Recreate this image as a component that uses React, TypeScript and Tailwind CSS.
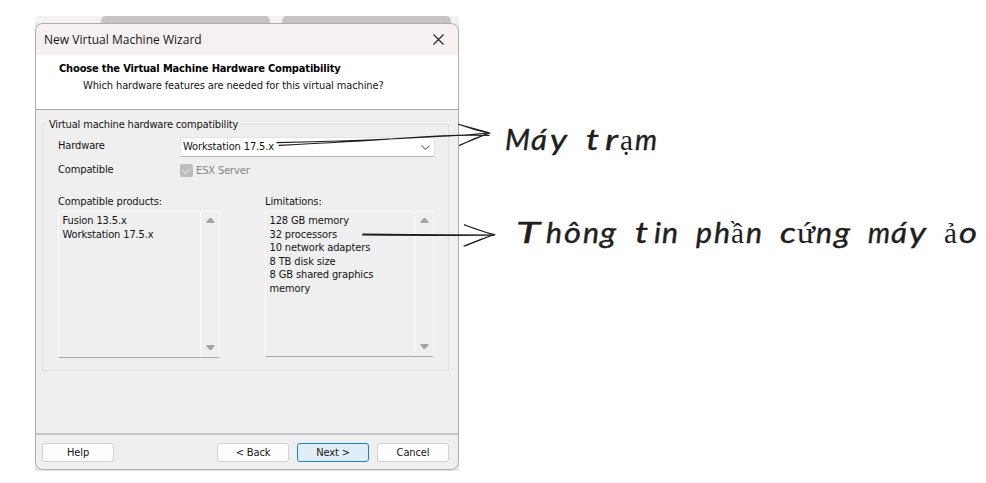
import type { ReactNode } from "react";

function WizardButton({ children, primary = false }: { children: ReactNode; primary?: boolean }) {
  return (
    <button
      className={`flex h-[19px] w-[72px] items-center justify-center rounded-[3px] border ${
        primary ? "border-[#1683d8] bg-[#e0eef9]" : "border-[#d2d2d2] bg-[#fdfdfd]"
      }`}
    >
      {children}
    </button>
  );
}

function ListBox({ items, className }: { items: string[]; className: string }) {
  return (
    <div className={`flex border border-t-[#f6f6f6] border-r-[#f5f5f5] border-b-[#aaaaaa] border-l-white ${className}`}>
      <ul className="flex-1 pt-[2px] pl-[3.5px] leading-[13.6px] whitespace-nowrap">
        {items.map((item) => (
          <li key={item}>{item}</li>
        ))}
      </ul>
      <div className="flex w-[19px] flex-col items-center justify-between border-l border-white pt-[5px] pb-[6px] text-[#a3a3a3]">
        <svg width="9" height="7" viewBox="0 0 9 7" fill="currentColor">
          <path d="M3.6 1h1.8L8.5 5v1h-8V5z" />
        </svg>
        <svg width="9" height="7" viewBox="0 0 9 7" fill="currentColor">
          <path d="M3.6 6h1.8L8.5 2V1h-8v1z" />
        </svg>
      </div>
    </div>
  );
}

function Wizard() {
  return (
    <section className="flex h-[447px] w-[424px] flex-col overflow-hidden rounded-[8px] border border-[#adadad] bg-[#efefef] font-['DejaVu_Sans_Condensed','DejaVu_Sans',sans-serif] text-[11px] leading-[14px] tracking-[-0.12px] text-[#141414]">
      <header className="flex h-[31px] shrink-0 items-center justify-between bg-[#f6f0f0] pr-[14px] pl-[8px] font-['Open_Sans',sans-serif] text-[12px]">
        <span className="whitespace-nowrap tracking-[0.02px]">New Virtual Machine Wizard</span>
        <svg width="11" height="11" viewBox="0 0 11 11" fill="none" stroke="#222" strokeWidth="1.1">
          <path d="M.5.5l10 10M10.5.5l-10 10" />
        </svg>
      </header>
      <div className="h-[55px] shrink-0 border-b border-[#a8a8a8] bg-white pt-[7px] whitespace-nowrap">
        <h1 className="pl-[23px] font-bold tracking-[-0.16px] text-black">Choose the Virtual Machine Hardware Compatibility</h1>
        <p className="mt-[3px] pl-[47px] tracking-[-0.11px]">Which hardware features are needed for this virtual machine?</p>
      </div>
      <div className="flex h-[325px] shrink-0 flex-col border-b-2 border-[#c8c8c8] px-[6px] pt-[14px] pr-[9px]">
        <div className="h-[247px] border border-[#e0e0e0]">
          <div className="-mt-[7px] ml-[4px] w-fit bg-[#efefef] px-[2px] whitespace-nowrap tracking-[-0.16px]">
            Virtual machine hardware compatibility
          </div>
          <div className="mt-[5px] ml-[15px] flex">
            <span className="w-[122px] pt-[2px]">Hardware</span>
            <div className="flex h-[20px] w-[255px] items-center justify-between border border-[#e2e2e2] border-b-[#bdbdbd] bg-white pr-[4px] pl-[2px]">
              <span>Workstation 17.5.x</span>
              <svg width="9" height="5" viewBox="0 0 9 5" fill="none" stroke="#858585" strokeWidth="1.1">
                <path d="M.5.5l4 4 4-4" />
              </svg>
            </div>
          </div>
          <div className="mt-[6px] ml-[15px] flex h-[16px]">
            <span className="w-[122px]">Compatible</span>
            <span className="mt-[1px] flex h-[13px] w-[13px] items-center justify-center rounded-[2px] bg-[#bebebe]">
              <svg width="9" height="8" viewBox="0 0 9 8" fill="none" stroke="#f5f5f5" strokeWidth="1">
                <path d="M1 4l2.3 2.3L8 1.7" />
              </svg>
            </span>
            <span className="mt-[1px] ml-[3px] text-[#858585]">ESX Server</span>
          </div>
          <div className="mt-[16px] ml-[15px] flex gap-[45px]">
            <div>
              <div>Compatible products:</div>
              <ListBox className="mt-[2px] h-[147px] w-[162px]" items={["Fusion 13.5.x", "Workstation 17.5.x"]} />
            </div>
            <div>
              <div>Limitations:</div>
              <ListBox
                className="mt-[2px] h-[146px] w-[169px]"
                items={["128 GB memory", "32 processors", "10 network adapters", "8 TB disk size", "8 GB shared graphics", "memory"]}
              />
            </div>
          </div>
        </div>
      </div>
      <footer className="flex pt-[8px] pr-[9px] pl-[6px]">
        <WizardButton>Help</WizardButton>
        <div className="ml-auto flex gap-[8px]">
          <WizardButton>&lt; Back</WizardButton>
          <WizardButton primary>Next &gt;</WizardButton>
          <WizardButton>Cancel</WizardButton>
        </div>
      </footer>
    </section>
  );
}

type Run = { t: string; x: number; w: number; serif?: boolean };

const workstationNote: Run[] = [
  { t: "M", x: 505, w: 25 },
  { t: "á", x: 531, w: 16 },
  { t: "y", x: 550, w: 17 },
  { t: "t", x: 586, w: 13 },
  { t: "r", x: 605, w: 13 },
  { t: "ạ", x: 620, w: 13, serif: true },
  { t: "m", x: 635, w: 22 },
];

const hardwareNote: Run[] = [
  { t: "T", x: 516, w: 24 },
  { t: "h", x: 546, w: 16 },
  { t: "ô", x: 564, w: 17 },
  { t: "n", x: 583, w: 16 },
  { t: "g", x: 600, w: 16 },
  { t: "t", x: 635, w: 13 },
  { t: "i", x: 654, w: 7 },
  { t: "n", x: 662, w: 16 },
  { t: "p", x: 696, w: 16 },
  { t: "h", x: 714, w: 16 },
  { t: "ầ", x: 731, w: 13, serif: true },
  { t: "n", x: 746, w: 16 },
  { t: "c", x: 780, w: 16 },
  { t: "ứ", x: 797, w: 18, serif: true },
  { t: "n", x: 816, w: 16 },
  { t: "g", x: 834, w: 16 },
  { t: "m", x: 868, w: 22 },
  { t: "á", x: 891, w: 16 },
  { t: "y", x: 909, w: 17 },
  { t: "ả", x: 944, w: 13, serif: true },
  { t: "o", x: 959, w: 18 },
];

function Note({ runs, y }: { runs: Run[]; y: number }) {
  return (
    <g fill="#1e1e1e">
      {runs.map((r) => (
        <text
          key={r.x}
          x={r.x}
          y={y}
          textLength={r.w}
          lengthAdjust="spacingAndGlyphs"
          stroke={r.serif ? "none" : "#1e1e1e"}
          strokeWidth={0.4}
          className={r.serif ? "font-['Liberation_Serif',serif] text-[29px]" : "font-['Lato',sans-serif] text-[28px] italic"}
        >
          {r.t}
        </text>
      ))}
    </g>
  );
}

function Annotations() {
  return (
    <svg className="absolute top-0 left-0" width="986" height="483" viewBox="0 0 986 483">
      <g fill="none" stroke="#1e1e1e" strokeWidth="1.2" strokeLinecap="round">
        <path d="M277 142.7Q350 141 410 138T489 133M279 145.3Q350 142 405 138T489 135.4" />
        <path d="M458.5 124.3Q474 130 489 133.2Q474 138 459.5 145.5M459 124.5L488.5 132.5M489 133Q475 139 460 145" />
        <path d="M363 234L410 234.5 494 235M362.5 234.8Q420 235.5 494 235.2" />
        <path d="M464.5 224.7Q476 229.5 494 234.7Q479 239.5 464 246M464.5 225L493 234.8L465 246" />
      </g>
      <Note runs={workstationNote} y={150} />
      <Note runs={hardwareNote} y={243} />
    </svg>
  );
}

export default function App() {
  return (
    <main className="relative h-[483px] w-[986px] overflow-hidden bg-white pt-[16px] pl-[35px]">
      <div className="h-[455px] w-[424px] bg-[#e6e6e6]">
        <div className="flex h-[7px] gap-[12px] bg-[#f2f2f2] pl-[66px]">
          <div className="-mb-2 h-[15px] w-[169px] rounded-t-[5px] bg-[#c4c4c4]" />
          <div className="-mb-2 h-[15px] w-[169px] rounded-t-[5px] bg-[#c4c4c4]" />
        </div>
        <div className="relative">
          <Wizard />
        </div>
      </div>
      <Annotations />
    </main>
  );
}
